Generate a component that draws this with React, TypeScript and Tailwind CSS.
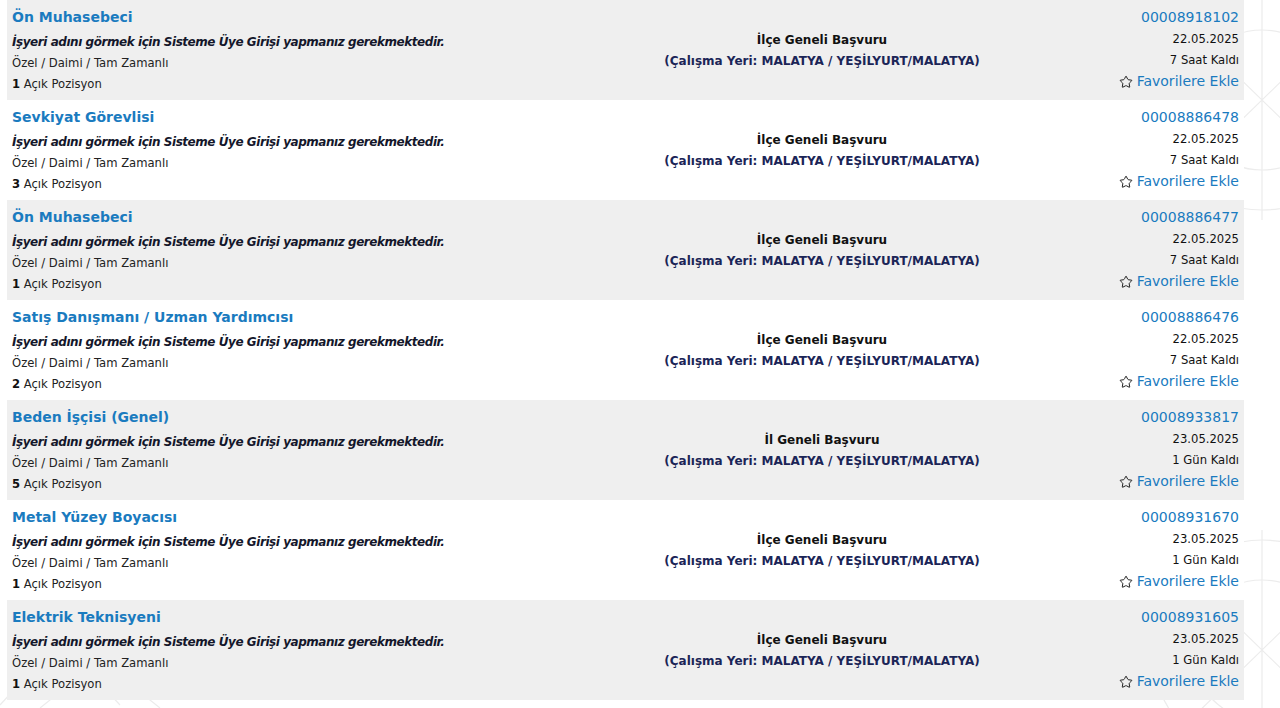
import { Star } from "lucide-react";

type Job = {
  title: string;
  count: number;
  scope: string;
  no: string;
  date: string;
  left: string;
};

const jobs: Job[] = [
  { title: "Ön Muhasebeci", count: 1, scope: "İlçe Geneli Başvuru", no: "00008918102", date: "22.05.2025", left: "7 Saat Kaldı" },
  { title: "Sevkiyat Görevlisi", count: 3, scope: "İlçe Geneli Başvuru", no: "00008886478", date: "22.05.2025", left: "7 Saat Kaldı" },
  { title: "Ön Muhasebeci", count: 1, scope: "İlçe Geneli Başvuru", no: "00008886477", date: "22.05.2025", left: "7 Saat Kaldı" },
  { title: "Satış Danışmanı / Uzman Yardımcısı", count: 2, scope: "İlçe Geneli Başvuru", no: "00008886476", date: "22.05.2025", left: "7 Saat Kaldı" },
  { title: "Beden İşçisi (Genel)", count: 5, scope: "İl Geneli Başvuru", no: "00008933817", date: "23.05.2025", left: "1 Gün Kaldı" },
  { title: "Metal Yüzey Boyacısı", count: 1, scope: "İlçe Geneli Başvuru", no: "00008931670", date: "23.05.2025", left: "1 Gün Kaldı" },
  { title: "Elektrik Teknisyeni", count: 1, scope: "İlçe Geneli Başvuru", no: "00008931605", date: "23.05.2025", left: "1 Gün Kaldı" },
];

const JobRow = ({ job, odd }: { job: Job; odd: boolean }) => {
  return (
    <div
      className={`grid h-[100px] grid-cols-[593px_444px_1fr] ${odd ? "bg-[#efefef]" : "bg-white"}`}
    >
      {/* left */}
      <div className="flex flex-col pl-[5px] pt-[7px]">
        <a className="h-[21px] text-[14px] font-bold leading-[21px] text-[#1a7bbf]">{job.title}</a>
        <p className="mt-[3px] h-[22px] text-[12px] font-bold italic leading-[22px] tracking-[-0.45px] text-[#14172b]">
          İşyeri adını görmek için Sisteme Üye Girişi yapmanız gerekmektedir.
        </p>
        <p className="h-[21px] text-[11.6px] leading-[21px] text-[#222]">Özel / Daimi / Tam Zamanlı</p>
        <p className="h-[21px] text-[11.6px] leading-[21px] text-[#222]">
          <b className="text-[#111]">{job.count}</b> Açık Pozisyon
        </p>
      </div>

      {/* middle */}
      <div className="flex flex-col items-center pt-[30px] text-[12px] font-bold">
        <p className="h-[21px] leading-[21px] text-[#111]">{job.scope}</p>
        <p className="h-[21px] leading-[21px] text-[#1b2557]">
          (Çalışma Yeri: MALATYA / YEŞİLYURT/MALATYA)
        </p>
      </div>

      {/* right */}
      <div className="flex flex-col items-end pr-[5px] pt-[7px]">
        <a className="h-[21px] text-[14px] leading-[21px] text-[#1a7bbf]">{job.no}</a>
        <p className="mt-[1px] h-[21px] text-[11.6px] leading-[21px] text-[#111]">{job.date}</p>
        <p className="h-[21px] text-[11.6px] leading-[21px] text-[#111]">{job.left}</p>
        <a className="flex h-[21px] items-center gap-[4px] text-[14px] leading-[21px] text-[#1a7bbf]">
          <Star size={14} strokeWidth={1.6} className="text-[#111]" />
          Favorilere Ekle
        </a>
      </div>
    </div>
  );
};

const Pattern = () => (
  <svg className="absolute inset-0 h-full w-full" viewBox="0 0 1280 708" fill="none" stroke="#ececec" strokeWidth="1.2">
    <circle cx="1262" cy="100" r="70" />
    <circle cx="1262" cy="100" r="110" />
    <path d="M1262 -20 L1262 220 M1190 30 L1334 170 M1334 30 L1190 170" />
    <circle cx="1262" cy="650" r="70" />
    <circle cx="1262" cy="650" r="110" />
    <path d="M1262 530 L1262 770 M1190 580 L1334 720 M1334 580 L1190 720" />
    <path d="M0 705 L60 640 L120 705 M40 708 L100 660 L160 708" />
  </svg>
);

export default function App() {
  return (
    <div className="relative h-[708px] w-[1280px] overflow-hidden bg-white font-['DejaVu_Sans',sans-serif]">
      <Pattern />
      <div className="relative ml-[7px] w-[1237px]">
        {jobs.map((job, i) => (
          <JobRow key={job.no} job={job} odd={i % 2 === 0} />
        ))}
      </div>
    </div>
  );
}
